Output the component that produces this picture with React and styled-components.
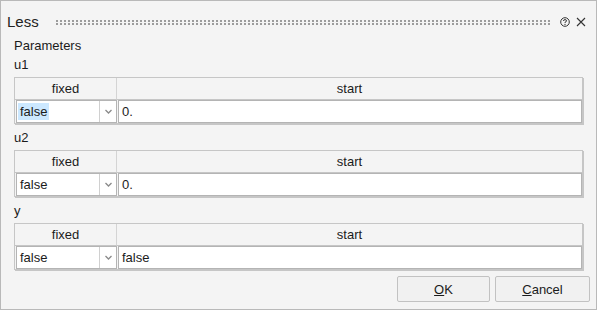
import React from 'react';
import styled, { createGlobalStyle } from 'styled-components';

const Global = createGlobalStyle`
  html, body { margin: 0; padding: 0; background: #f4f4f4; }
  body { font-family: "Liberation Sans", Arial, sans-serif; font-size: 13px; color: #1b1b1b; }
`;

const Window = styled.div`
  width: 597px;
  height: 310px;
  box-sizing: border-box;
  border: 1px solid #b9b9b9;
  background: #f4f4f4;
  display: flex;
  flex-direction: column;
`;

const TitleBar = styled.div`
  height: 36px;
  flex-shrink: 0;
  display: flex;
  align-items: center;
  padding: 0 10px 0 6px;
  box-sizing: border-box;
`;

const Title = styled.div`
  font-size: 15px;
  color: #222;
  margin-top: 4px;
`;

const Grip = styled.div`
  flex: 1;
  height: 5px;
  margin: 6px 8px 0 17px;
  background-image: radial-gradient(circle at 1px 1px, #9c9c9c 0.8px, transparent 1.1px);
  background-size: 4px 3px;
`;

const TitleIcons = styled.div`
  display: flex;
  align-items: center;
  gap: 6px;
  margin-top: 5px;
`;

const Body = styled.div`
  flex: 1;
  display: flex;
  flex-direction: column;
  padding: 1px 12px 7px 13px;
`;

const Heading = styled.div`
  line-height: 16px;
  margin-bottom: 3px;
`;

const Label = styled.div`
  line-height: 16px;
  margin-bottom: 4px;
`;

const Table = styled.div`
  display: grid;
  grid-template-columns: 102px 1fr;
  border: 1px solid #c6c6c6;
  box-shadow: 1px 1px 0 #c6c6c6;
  margin-bottom: 6px;
  width: 567px;
`;

const HeadCell = styled.div`
  height: 21px;
  line-height: 21px;
  text-align: center;
  border-right: ${({ $last }) => ($last ? 'none' : '1px solid #d4d4d4')};
  border-bottom: 1px solid #c6c6c6;
`;

const Combo = styled.div`
  display: flex;
  height: 23px;
  background: #fff;
  border: 1px solid #b4b4b4;
  border-right: none;
  box-sizing: border-box;
  margin: 0 0 0 1px;
`;

const ComboText = styled.div`
  flex: 1;
  display: flex;
  align-items: center;
  padding-left: 1px;
`;

const Selected = styled.span`
  background: ${({ $sel }) => ($sel ? '#cce8ff' : 'transparent')};
  padding: 1px 2px;
`;

const Arrow = styled.div`
  width: 16px;
  display: flex;
  align-items: center;
  justify-content: center;
  border-left: 1px solid #d0d0d0;
  border-right: 1px solid #b4b4b4;
`;

const Input = styled.div`
  height: 23px;
  background: #fff;
  border: 1px solid #b4b4b4;
  box-sizing: border-box;
  margin-left: 1px;
  padding-left: 3px;
  display: flex;
  align-items: center;
`;

const Footer = styled.div`
  display: flex;
  justify-content: flex-end;
  gap: 5px;
  margin-top: auto;
  margin-right: -6px;
`;

const Button = styled.button`
  width: ${({ $w }) => $w}px;
  height: 26px;
  background: #f1f1f1;
  border: 1px solid #c2c2c2;
  border-radius: 2px;
  font-family: inherit;
  font-size: 13px;
  color: #1b1b1b;
  padding: 0;
  u { text-decoration: underline; }
`;

const Chevron = () => (
  <svg width="7" height="5" viewBox="0 0 7 5">
    <path d="M0.5 1 L3.5 4 L6.5 1" fill="none" stroke="#8a8a8a" strokeWidth="1.3" />
  </svg>
);

const rows = [
  { name: 'u1', start: '0.', sel: true },
  { name: 'u2', start: '0.' },
  { name: 'y', start: 'false' },
];

export default function App() {
  return (
    <>
      <Global />
      <Window>
        <TitleBar>
          <Title>Less</Title>
          <Grip />
          <TitleIcons>
            <svg width="10" height="10" viewBox="0 0 10 10">
              <circle cx="5" cy="5" r="4.3" fill="none" stroke="#333" strokeWidth="1" />
              <path d="M3.5 4 Q3.5 2.6 5 2.6 Q6.5 2.6 6.5 3.9 Q6.5 4.8 5 5.3 L5 6" fill="none" stroke="#333" strokeWidth="1" />
              <circle cx="5" cy="7.4" r="0.6" fill="#333" />
            </svg>
            <svg width="10" height="10" viewBox="0 0 10 10">
              <path d="M1 1 L9 9 M9 1 L1 9" stroke="#333" strokeWidth="1.1" />
            </svg>
          </TitleIcons>
        </TitleBar>
        <Body>
          <Heading>Parameters</Heading>
          {rows.map((r) => (
            <React.Fragment key={r.name}>
              <Label>{r.name}</Label>
              <Table>
                <HeadCell>fixed</HeadCell>
                <HeadCell $last>start</HeadCell>
                <Combo>
                  <ComboText><Selected $sel={r.sel}>false</Selected></ComboText>
                  <Arrow><Chevron /></Arrow>
                </Combo>
                <Input>{r.start}</Input>
              </Table>
            </React.Fragment>
          ))}
          <Footer>
            <Button $w={93}><u>O</u>K</Button>
            <Button $w={95}><u>C</u>ancel</Button>
          </Footer>
        </Body>
      </Window>
    </>
  );
}
